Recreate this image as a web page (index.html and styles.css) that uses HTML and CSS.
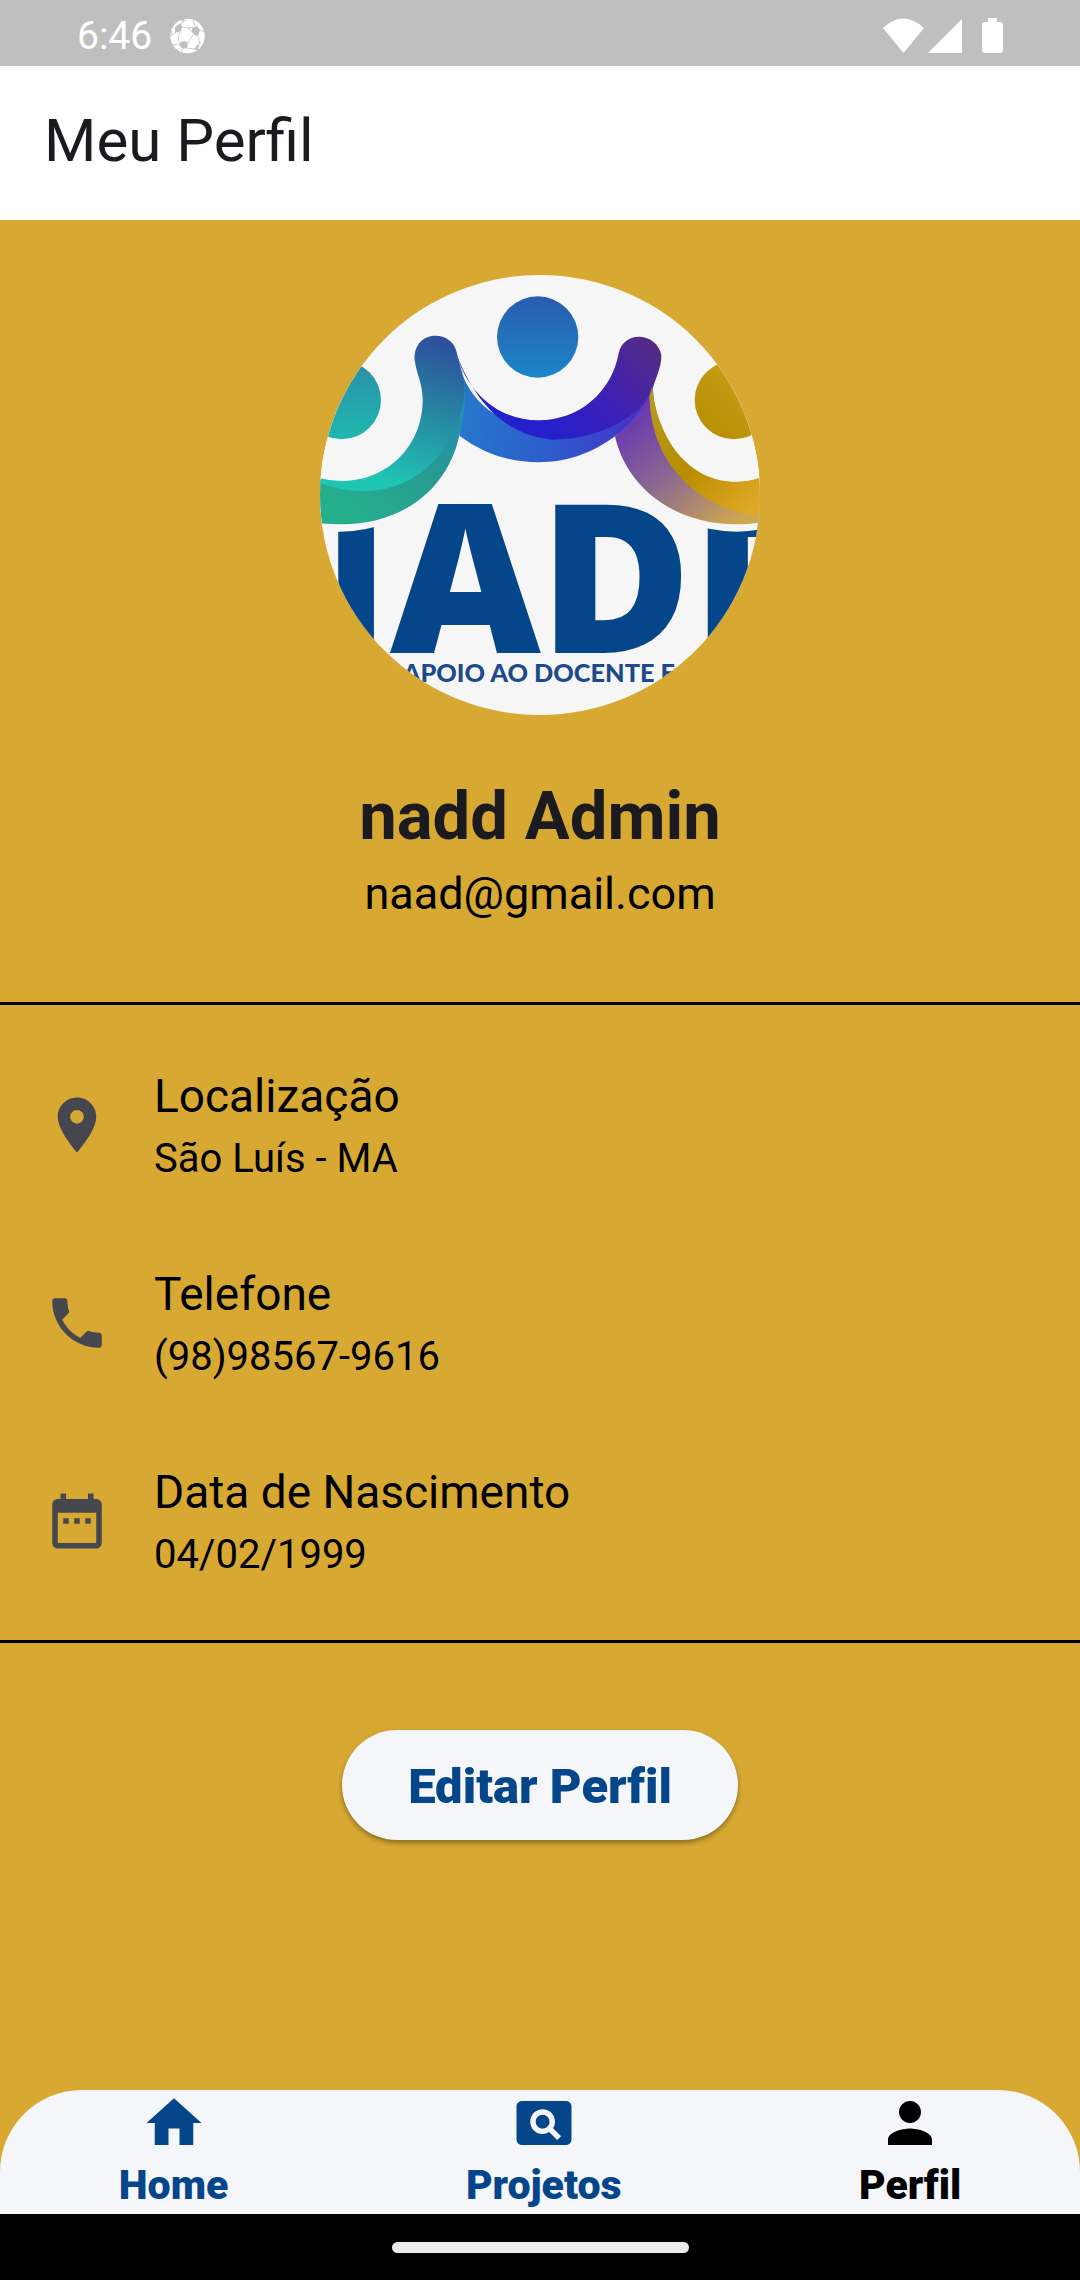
FILE: index.html
```html
<!DOCTYPE html>
<html lang="pt-BR">
<head>
<meta charset="utf-8">
<meta name="viewport" content="width=device-width">
<title>Meu Perfil</title>
<link rel="stylesheet" href="styles.css">
</head>
<body>
<div class="status-bar">
  <span class="clock">6:46</span>
  <svg class="ball" viewBox="0 0 35 36" aria-hidden="true">
    <circle cx="17.500" cy="18" r="17.300" fill="#fff"/>
    <g fill="#bfbfbf">
      <path d="M5 9l6-4 1 4-1 4-6 2z"/>
      <path d="M22 10l5-2 3 4-2 6-4-1-2-3z"/>
      <path d="M10 24l5-1 3 2-1 5-4 1-4-4z"/>
      <path d="M27 27l2 0-1 5-4 0z"/>
      <path d="M11 1l4 0-3 3zM0 13l2 0-1 5z"/>
    </g>
    <path d="M12 9l6 1 4 4M11 13l-3 5 1 6M23 17l-5 8M17 30l8 1M28 18l2 8-3 2M5 15l-5 3M8 26l-6 1M11 5l6-3M23 2l2 6M30 12l4 2M12 31l0 3M18 10l5-1" fill="none" stroke="#bfbfbf" stroke-width=".8"/>
  </svg>
  <svg class="signals" viewBox="0 0 120 36" aria-hidden="true">
    <path fill="#fff" d="M0 10Q20-9 41 10L20.500 35zM79 1v34H45zM99 7q0-3 3-3h3V0h9v4h3q3 0 3 3v25q0 3-3 3h-15q-3 0-3-3z"/>
  </svg>
</div>

<header class="app-bar"><h1>Meu Perfil</h1></header>

<main class="profile">
  <section class="identity">
    <svg class="avatar" viewBox="30 30 1320 1320" role="img" aria-label="Logo NADD">
      <defs>
        <clipPath id="round"><circle cx="690" cy="690" r="660"/></clipPath>
        <linearGradient id="head" x1="0" y1="0" x2="0" y2="1"><stop offset="0" stop-color="#2a5cb0"/><stop offset="1" stop-color="#1c86c8"/></linearGradient>
        <linearGradient id="headTeal" x1="0" y1="0" x2="0" y2="1"><stop offset="0" stop-color="#2a8fa8"/><stop offset="1" stop-color="#20b8b0"/></linearGradient>
        <linearGradient id="headGold" x1="1" y1="0" x2="0" y2="1"><stop offset="0" stop-color="#c9a520"/><stop offset="1" stop-color="#b68c00"/></linearGradient>
        <linearGradient id="teal" gradientUnits="userSpaceOnUse" x1="390" y1="220" x2="250" y2="660"><stop offset="0" stop-color="#2d4d9e"/><stop offset=".5" stop-color="#2689a2"/><stop offset="1" stop-color="#1fc6b4"/></linearGradient>
        <linearGradient id="tealBack" gradientUnits="userSpaceOnUse" x1="460" y1="380" x2="120" y2="760"><stop offset="0" stop-color="#2489b8"/><stop offset=".5" stop-color="#289b91"/><stop offset="1" stop-color="#25b08c"/></linearGradient>
        <linearGradient id="violet" gradientUnits="userSpaceOnUse" x1="1000" y1="230" x2="700" y2="500"><stop offset="0" stop-color="#522b88"/><stop offset=".5" stop-color="#3d1fb8"/><stop offset="1" stop-color="#2320cc"/></linearGradient>
        <linearGradient id="blueBack" gradientUnits="userSpaceOnUse" x1="450" y1="400" x2="1000" y2="450"><stop offset="0" stop-color="#2678cc"/><stop offset=".5" stop-color="#2d5dcc"/><stop offset="1" stop-color="#4430c8"/></linearGradient>
        <linearGradient id="gold" gradientUnits="userSpaceOnUse" x1="1030" y1="400" x2="1350" y2="700"><stop offset="0" stop-color="#b69b1b"/><stop offset=".5" stop-color="#b88c00"/><stop offset="1" stop-color="#e0a824"/></linearGradient>
        <linearGradient id="goldBack" gradientUnits="userSpaceOnUse" x1="970" y1="420" x2="1260" y2="780"><stop offset="0" stop-color="#6434b4"/><stop offset=".5" stop-color="#8b6991"/><stop offset="1" stop-color="#cda650"/></linearGradient>
      </defs>
      <g clip-path="url(#round)">
        <path fill="#f6f6f6" d="M30 30h1320v1320H30z"/>
        <g class="logo-name">
          <text x="240" y="1165" text-anchor="end">N</text>
          <text x="466" y="1165" text-anchor="middle">A</text>
          <text x="688" y="1165">D</text>
          <text x="1145" y="1165">D</text>
        </g>
        <circle cx="90" cy="400" r="400" fill="#f6f6f6"/>
        <circle cx="1280" cy="400" r="400" fill="#f6f6f6"/>
        <text class="logo-tagline" x="278" y="1250">APOIO AO DOCENTE E</text>
        <circle cx="683" cy="216" r="122" fill="url(#head)"/>
        <circle cx="95" cy="405" r="118" fill="url(#headTeal)"/>
        <circle cx="1272" cy="405" r="118" fill="url(#headGold)"/>
        <path fill="url(#blueBack)" d="M444 290C480 420 570 480 700 490Q880 500 1030 380Q990 460 915 514Q810 592 685 592Q555 592 448 512Z"/>
        <path fill="url(#violet)" d="M440 270C480 400 580 466 685 466C810 466 905 380 926 265C940 195 1040 200 1054 270C1056 310 1030 350 1025 385C970 470 850 525 725 524C590 510 500 420 440 270Z"/>
        <path fill="url(#tealBack)" d="M460 335Q475 400 448 512C410 680 270 778 95 778Q60 778 30 775V645L200 660Q400 600 460 335Z"/>
        <path fill="url(#teal)" d="M314 285C308 195 425 190 440 262C448 300 462 330 464 370C460 450 420 560 330 625C240 690 130 690 30 655V640Q60 648 95 648C235 648 338 540 338 405C338 355 320 330 314 285Z"/>
        <path fill="url(#goldBack)" d="M1028 370Q990 455 915 514C950 670 1095 778 1280 778Q1320 778 1350 772V700Q1050 670 1028 370Z"/>
        <path fill="url(#gold)" d="M1026 365C1045 530 1140 650 1278 650Q1315 650 1350 638V752C1220 740 1110 665 1055 555Q1020 480 1018 395Z"/>
      </g>
    </svg>
    <h2 class="name">nadd Admin</h2>
    <p class="email">naad@gmail.com</p>
  </section>

  <hr class="divider">
  <ul class="details">
    <li class="detail">
      <svg class="icon" viewBox="0 0 24 24" aria-hidden="true"><path d="M12 2C8.130 2 5 5.130 5 9c0 5.250 7 13 7 13s7-7.750 7-13c0-3.870-3.130-7-7-7zm0 9.500a2.500 2.500 0 0 1 0-5 2.500 2.500 0 0 1 0 5z"/></svg>
      <div><h3>Localização</h3><p>São Luís - MA</p></div>
    </li>
    <li class="detail">
      <svg class="icon" viewBox="0 0 24 24" aria-hidden="true"><path d="M6.620 10.790c1.440 2.830 3.760 5.140 6.590 6.590l2.200-2.200c.27-.27.67-.36 1.020-.24 1.120.37 2.330.57 3.570.57.55 0 1 .45 1 1V20c0 .55-.45 1-1 1-9.390 0-17-7.610-17-17 0-.55.45-1 1-1h3.500c.55 0 1 .45 1 1 0 1.250.2 2.450.57 3.570.11.35.03.74-.25 1.020l-2.200 2.200z"/></svg>
      <div><h3>Telefone</h3><p>(98)98567-9616</p></div>
    </li>
    <li class="detail">
      <svg class="icon" viewBox="0 0 24 24" aria-hidden="true"><path d="M9 11H7v2h2v-2zm4 0h-2v2h2v-2zm4 0h-2v2h2v-2zm2-7h-1V2h-2v2H8V2H6v2H5c-1.110 0-1.990.9-1.990 2L3 20c0 1.100.89 2 2 2h14c1.100 0 2-.9 2-2V6c0-1.100-.9-2-2-2zm0 16H5V9h14v11z"/></svg>
      <div><h3>Data de Nascimento</h3><p>04/02/1999</p></div>
    </li>
  </ul>
  <hr class="divider">

  <button class="edit" type="button">Editar Perfil</button>
</main>

<nav class="tabs" aria-label="Principal">
  <a class="tab" href="#home">
    <svg class="icon" viewBox="0 0 24 24" aria-hidden="true"><path d="M10 20v-6h4v6h5v-8h3L12 3 2 12h3v8z"/></svg>Home
  </a>
  <a class="tab" href="#projetos">
    <svg class="icon" viewBox="0 0 24 24" aria-hidden="true"><path d="M11.500 9C10.120 9 9 10.120 9 11.500s1.120 2.500 2.500 2.500 2.500-1.120 2.500-2.500S12.880 9 11.500 9zM20 4H4c-1.100 0-2 .9-2 2v12c0 1.100.9 2 2 2h16c1.100 0 2-.9 2-2V6c0-1.100-.9-2-2-2zm-3.210 14.210l-2.910-2.910c-.69.44-1.510.7-2.390.7C9.010 16 7 13.990 7 11.500S9.010 7 11.500 7 16 9.010 16 11.500c0 .88-.26 1.690-.7 2.390l2.910 2.900-1.420 1.420z"/></svg>Projetos
  </a>
  <a class="tab current" href="#perfil" aria-current="page">
    <svg class="icon" viewBox="0 0 24 24" aria-hidden="true"><path d="M12 12c2.210 0 4-1.790 4-4s-1.790-4-4-4-4 1.790-4 4 1.790 4 4 4zm0 2c-2.670 0-8 1.340-8 4v2h16v-2c0-2.660-5.330-4-8-4z"/></svg>Perfil
  </a>
</nav>
<div class="gesture-bar"><span class="pill"></span></div>
</body>
</html>
```
FILE: styles.css
```css
* { box-sizing: border-box; }

body {
  margin: 0;
  min-height: 100vh;
  display: flex;
  flex-direction: column;
  background: #d8a932;
  color: #000;
  font-family: Roboto, "Liberation Sans", sans-serif;
}

h1, h2, h3, p, ul { margin: 0; padding: 0; font-weight: 400; }

.status-bar {
  display: flex;
  align-items: center;
  height: 66px;
  padding: 5px 77px 0;
  background: #bfbfbf;
  color: #fff;
}
.clock { font-size: 39px; line-height: 66px; }
.ball { width: 35px; height: 36px; margin-left: 18px; }
.signals { width: 120px; height: 36px; margin-left: auto; }

.app-bar { padding: 31px 44px 35px; background: #fff; color: #1b1b1f; }
.app-bar h1 { font-size: 60px; line-height: 88px; }

.profile {
  flex: 1;
  display: flex;
  flex-direction: column;
}
.identity {
  display: flex;
  flex-direction: column;
  align-items: center;
  padding: 55px 0;
}
.avatar { width: 440px; height: 440px; margin-bottom: 57px; }
.logo-name { font: 800 623px "Open Sans", sans-serif; fill: #05468a; }
.logo-tagline { font: 900 76px Lato, sans-serif; fill: #1d4a8a; }
.name { margin-bottom: 1px; color: #1b1b1f; font-size: 67px; font-weight: 700; line-height: 88px; }
.email { font-size: 45px; line-height: 66px; }

.divider {
  width: 100%;
  height: 3px;
  margin: 20px 0 21px;
  border: 0;
  background: #000;
}

.details { list-style: none; }
.detail {
  display: flex;
  align-items: center;
  gap: 44px;
  min-height: 198px;
  padding: 0 44px;
}
.detail h3 { margin-bottom: 4px; font-size: 46px; line-height: 62px; }
.detail p { font-size: 40px; line-height: 55px; }
.icon { display: block; width: 66px; height: 66px; fill: currentColor; }
.detail .icon { color: #46464f; }

.edit {
  align-self: center;
  height: 110px;
  margin: 66px 0;
  padding: 2px 66px 0;
  border: 0;
  border-radius: 55px;
  background: #f5f6fa;
  box-shadow: 0 3px 5px rgba(0, 0, 0, .35);
  color: #05468a;
  font: 900 49px Roboto, "Liberation Sans", sans-serif;
  font-variant-ligatures: none;
}

.tabs {
  display: flex;
  justify-content: space-around;
  border-radius: 82px 82px 0 0;
  background: #f5f6fa;
}
.tab {
  display: flex;
  flex-direction: column;
  align-items: center;
  color: #05468a;
  font-size: 41px;
  font-weight: 900;
  font-variant-ligatures: none;
  line-height: 58px;
  text-decoration: none;
}
.tab.current { color: #000; }

.gesture-bar {
  display: flex;
  align-items: center;
  justify-content: center;
  height: 66px;
  background: #000;
}
.pill { width: 297px; height: 11px; border-radius: 6px; background: #ebebeb; }
```
